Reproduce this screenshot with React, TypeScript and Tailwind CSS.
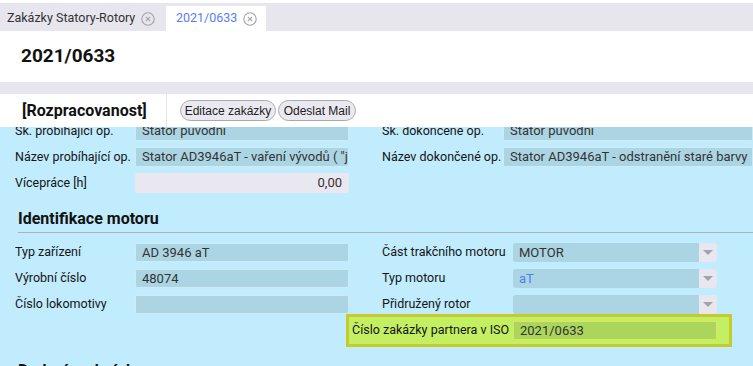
import React from "react";

const Field = ({
  value,
  w,
  gray,
  right,
  color,
}: {
  value?: string;
  w: string;
  gray?: boolean;
  right?: boolean;
  color?: string;
}) => (
  <div
    className={`${w} h-full flex items-center px-[6px] overflow-hidden whitespace-nowrap border rounded-[2px] text-[13px] ${
      gray ? "bg-[#e9e7ef] border-[#e9e7ef]" : "bg-[#acd5e4] border-[#cfeaf4]"
    } ${right ? "justify-end" : ""} ${color ?? "text-[#333]"}`}
  >
    {value}
  </div>
);

const Select = ({ value, color }: { value?: string; color?: string }) => (
  <div className="w-[204px] h-full flex rounded-[3px] overflow-hidden">
    <div
      className={`flex-1 bg-[#acd5e4] flex items-center px-[6px] text-[13px] ${
        color ?? "text-[#333]"
      }`}
    >
      {value}
    </div>
    <div className="w-[18px] bg-[#e8e6ef] flex items-center justify-center">
      <div className="w-0 h-0 border-l-[5px] border-r-[5px] border-t-[5px] border-l-transparent border-r-transparent border-t-[#a3a3ab]" />
    </div>
  </div>
);

const CloseIcon = () => (
  <svg width="14" height="14" viewBox="0 0 14 14" className="shrink-0">
    <circle cx="7" cy="7" r="6.2" fill="none" stroke="#a2a2a6" strokeWidth="1.1" />
    <path d="M4.8 4.8 L9.2 9.2 M9.2 4.8 L4.8 9.2" stroke="#a2a2a6" strokeWidth="1.1" />
  </svg>
);

const Row = ({ label, lw, children, h = "h-[20px]" }: { label: string; lw: string; children: React.ReactNode; h?: string }) => (
  <div className={`flex items-center ${h}`}>
    <div className={`${lw} shrink-0 text-[12.5px] text-[#151515] whitespace-nowrap`}>{label}</div>
    {children}
  </div>
);

export default function App() {
  return (
    <div className="w-[753px] h-[366px] overflow-hidden bg-white flex flex-col font-['Roboto',sans-serif]">
      <div className="h-[3px] bg-white shrink-0" />
      {/* tabs */}
      <div className="h-[28px] shrink-0 bg-[#e7e6ef] flex items-end">
        <div className="h-[25px] w-[166px] flex items-center gap-[6px] pl-[7px] text-[12.5px] text-[#333]">
          Zakázky Statory-Rotory
          <CloseIcon />
        </div>
        <div className="h-[25px] w-[100px] bg-white flex items-center gap-[6px] pl-[10px] text-[12.5px] text-[#5a7ef2]">
          2021/0633
          <CloseIcon />
        </div>
      </div>
      {/* header */}
      <div className="h-[51px] shrink-0 flex items-center pl-[21px] text-[19px] font-bold text-[#111]">
        2021/0633
      </div>
      <div className="h-[12px] shrink-0 bg-[#e7e6ef]" />
      {/* toolbar */}
      <div className="h-[33px] shrink-0 flex items-center bg-white">
        <div className="w-[167px] h-full border-r border-[#e6e6ea] flex items-center pl-[22px] text-[16px] font-bold text-[#111]">
          [Rozpracovanost]
        </div>
        <div className="flex items-center gap-[2px] ml-[13px] font-['Liberation_Sans',sans-serif] text-[12px] text-[#222]">
          <button className="h-[21px] w-[96px] rounded-full border border-[#a9a9ad] bg-[#ebe9f0]">Editace zakázky</button>
          <button className="h-[21px] w-[78px] rounded-full border border-[#a9a9ad] bg-[#ebe9f0]">Odeslat Mail</button>
        </div>
      </div>
      {/* content */}
      <div className="flex-1 bg-[#c0ecfd] overflow-hidden">
        <div className="-mt-[6px]">
          {/* section 1 */}
          <div className="flex">
            <div className="w-[367px] pl-[15px] flex flex-col gap-[6px]">
              <Row label="Sk. probíhající op." lw="w-[120px]">
                <Field w="w-[214px]" value="Stator původní" />
              </Row>
              <Row label="Název probíhající op." lw="w-[120px]">
                <Field w="w-[214px]" value={'Stator AD3946aT - vaření vývodů ( "je" )'} />
              </Row>
              <Row label="Vícepráce [h]" lw="w-[120px]">
                <Field w="w-[214px]" value="0,00" gray right />
              </Row>
            </div>
            <div className="flex-1 pl-[15px] flex flex-col gap-[6px]">
              <Row label="Sk. dokončené op." lw="w-[121px]">
                <Field w="w-[250px]" value="Stator původní" />
              </Row>
              <Row label="Název dokončené op." lw="w-[121px]">
                <Field w="w-[250px]" value="Stator AD3946aT - odstranění staré barvy" />
              </Row>
            </div>
          </div>
          <div className="ml-[18px] pt-[16px] pb-[3px] border-b border-[#afafbf] text-[16px] leading-[20px] font-bold text-[#111]">
            Identifikace motoru
          </div>
          {/* section 2 */}
          <div className="flex mt-[10px]">
            <div className="w-[367px] pl-[15px] flex flex-col gap-[7px]">
              <Row label="Typ zařízení" lw="w-[120px]" h="h-[19px]">
                <Field w="w-[214px]" value="AD 3946 aT" />
              </Row>
              <Row label="Výrobní číslo" lw="w-[120px]" h="h-[19px]">
                <Field w="w-[214px]" value="48074" />
              </Row>
              <Row label="Číslo lokomotivy" lw="w-[120px]" h="h-[19px]">
                <Field w="w-[214px]" />
              </Row>
            </div>
            <div className="flex-1 pl-[15px] flex flex-col gap-[7px]">
              <Row label="Část trakčního motoru" lw="w-[131px]" h="h-[19px]">
                <Select value="MOTOR" />
              </Row>
              <Row label="Typ motoru" lw="w-[131px]" h="h-[19px]">
                <Select value="aT" color="text-[#4d80f0]" />
              </Row>
              <Row label="Přidružený rotor" lw="w-[131px]" h="h-[19px]">
                <Select />
              </Row>
              <div className="-ml-[36px] -mt-[7px] w-[386px] h-[33px] border-[3px] border-[#c6cb2d] bg-[#c3ef63] flex items-center">
                <div className="w-[164px] pl-[3px] text-[12.5px] text-[#151515] whitespace-nowrap">Číslo zakázky partnera v ISO</div>
                <div className="w-[204px] h-[19px] bg-[#acd65b] border border-[#dde46a] flex items-center px-[6px] text-[13px] text-[#333]">
                  2021/0633
                </div>
              </div>
            </div>
          </div>
          <div className="ml-[18px] mt-[14px] text-[16px] leading-[20px] font-bold text-[#111]">
            Dodací podmínky
          </div>
        </div>
      </div>
    </div>
  );
}
